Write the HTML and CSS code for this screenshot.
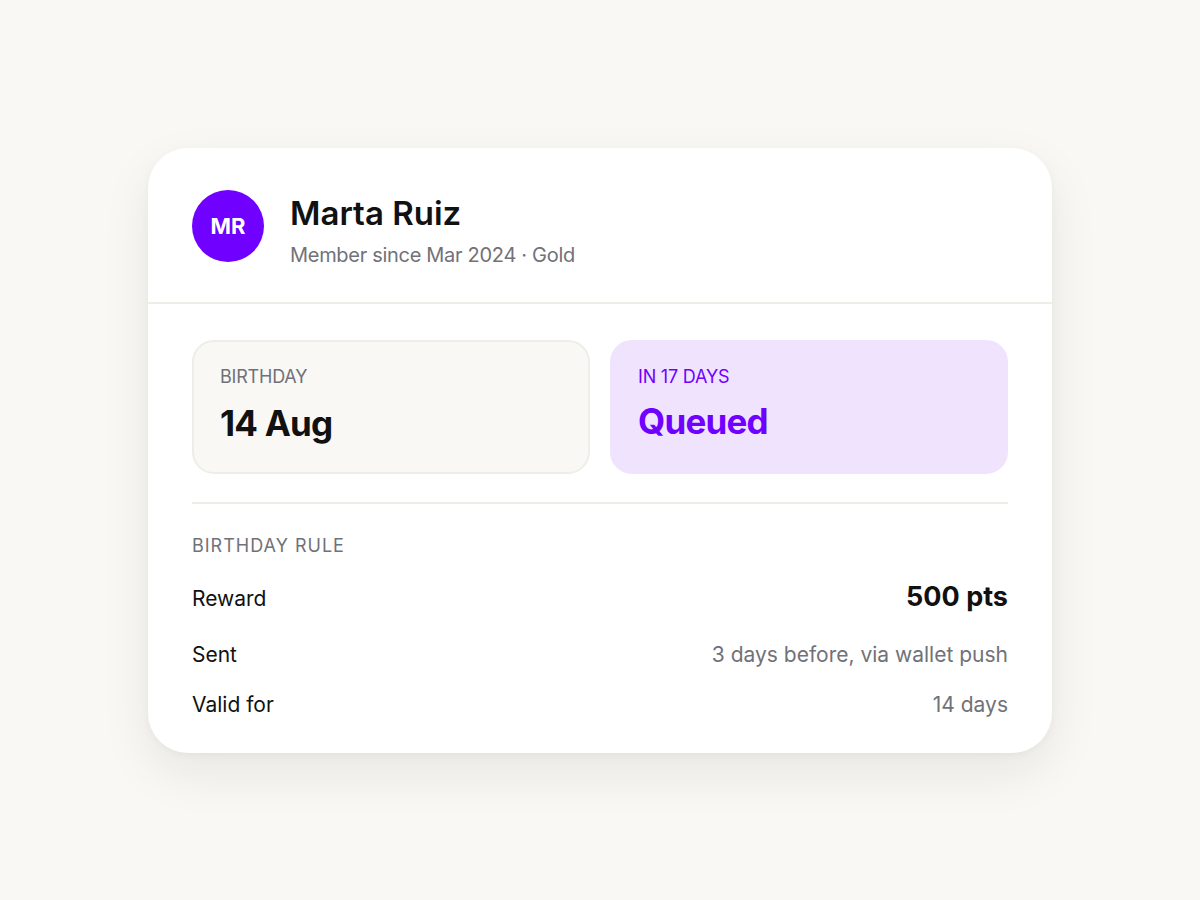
FILE: index.html
```html
<!DOCTYPE html>
<html lang="en">
<head>
    <meta charset="UTF-8">
    <meta name="viewport" content="width=device-width, initial-scale=1.0">
    <title>Member birthday</title>
    <link rel="stylesheet" href="styles.css">
</head>
<body>
    <div class="card">
        <div class="card-header">
            <div class="avatar">MR</div>
            <div class="member">
                <div class="member-name">Marta Ruiz</div>
                <div class="member-meta">Member since Mar 2024 · Gold</div>
            </div>
        </div>

        <div class="card-body">
            <div class="tiles">
                <div class="tile">
                    <div class="tile-label">BIRTHDAY</div>
                    <div class="tile-value">14 Aug</div>
                </div>
                <div class="tile tile-accent">
                    <div class="tile-label">IN 17 DAYS</div>
                    <div class="tile-value">Queued</div>
                </div>
            </div>

            <div class="rule">
                <div class="rule-title">BIRTHDAY RULE</div>
                <div class="rule-row rule-row-main">
                    <span class="rule-key">Reward</span>
                    <span class="rule-value rule-value-strong">500 pts</span>
                </div>
                <div class="rule-row">
                    <span class="rule-key">Sent</span>
                    <span class="rule-value">3 days before, via wallet push</span>
                </div>
                <div class="rule-row">
                    <span class="rule-key">Valid for</span>
                    <span class="rule-value">14 days</span>
                </div>
            </div>
        </div>
    </div>
</body>
</html>
```

FILE: styles.css
```css
body {
    font-family: Inter, "Noto Sans", sans-serif;
    margin: 0;
    padding: 148px 0;
    background-color: #f9f8f5;
    color: #111;
}

.card {
    width: 904px;
    margin: 0 auto;
    background-color: #fff;
    border-radius: 40px;
    box-shadow: 0 20px 50px rgba(40, 30, 10, 0.08), 0 2px 8px rgba(40, 30, 10, 0.04);
    overflow: hidden;
}

.card-header {
    display: flex;
    align-items: flex-start;
    gap: 26px;
    padding: 42px 44px 37px;
    border-bottom: 2px solid #efede8;
}

.avatar {
    width: 72px;
    height: 72px;
    border-radius: 50%;
    background-color: #7000ff;
    color: #fff;
    display: flex;
    align-items: center;
    justify-content: center;
    font-size: 22px;
    font-weight: 700;
}

.member {
    padding-top: 3px;
}

.member-name {
    font-size: 33px;
    font-weight: 600;
    line-height: 40px;
}

.member-meta {
    margin-top: 12px;
    font-size: 20px;
    line-height: 20px;
    color: #717179;
    letter-spacing: -0.3px;
}

.card-body {
    padding: 36px 44px 21px;
}

.tiles {
    display: grid;
    grid-template-columns: 1fr 1fr;
    gap: 20px;
    padding-bottom: 28px;
    border-bottom: 2px solid #efede8;
}

.tile {
    background-color: #f9f8f5;
    border: 2px solid #efede8;
    border-radius: 22px;
    padding: 23px 26px 27px;
}

.tile-label {
    font-size: 18px;
    color: #717179;
    line-height: 24px;
    letter-spacing: -0.2px;
}

.tile-value {
    margin-top: 12px;
    font-size: 35px;
    font-weight: 700;
    line-height: 44px;
    letter-spacing: -0.8px;
}

.tile-accent {
    background-color: #f0e3fe;
    border-color: #f0e3fe;
}

.tile-accent .tile-label,
.tile-accent .tile-value {
    color: #7000ff;
}

.tile-accent .tile-value {
    margin-top: 10px;
}

.rule {
    padding-top: 30px;
}

.rule-title {
    font-size: 18px;
    color: #717179;
    letter-spacing: 1px;
    line-height: 24px;
    margin-bottom: 14px;
}

.rule-row {
    display: flex;
    justify-content: space-between;
    align-items: baseline;
    font-size: 21px;
    line-height: 30px;
    padding: 8px 0 12px;
}

.rule-row-main {
    padding: 10px 0 18px;
}

.rule-value {
    color: #717179;
}

.rule-value-strong {
    color: #111;
    font-size: 27px;
    font-weight: 700;
}
```
